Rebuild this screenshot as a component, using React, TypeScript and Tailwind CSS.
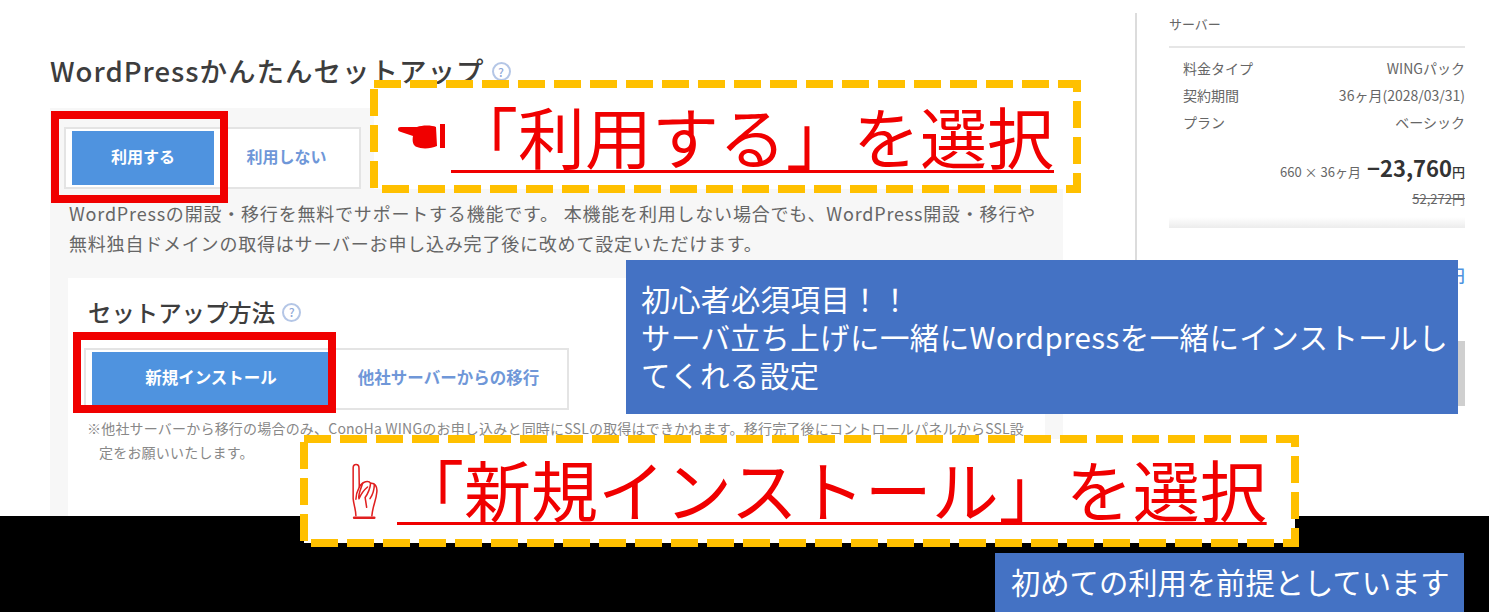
const jp = { fontFamily: '"Noto Sans CJK JP", sans-serif' }

function HelpIcon({ size }: { size: string }) {
  return (
    <span className={`inline-flex items-center justify-center rounded-full border-2 border-[#b4c6e6] text-[#8fa8d8] font-medium leading-none ${size}`}>
      ?
    </span>
  )
}

function DashedFrame({ width, height }: { width: number; height: number }) {
  return (
    <svg className="absolute left-0 top-0" width={width} height={height}>
      <rect x="4" y="4" width={width - 8} height={height - 8} fill="white" stroke="#ffc000" strokeWidth="8" strokeDasharray="27 9" />
    </svg>
  )
}

function HandRight() {
  return (
    <svg width="49" height="25" viewBox="0 0 49 25" className="shrink-0">
      <path d="M0 5 C0 3 2 3 5 3 L19 3 C24 1 34 1 38 3 L39 22 C33 25 23 25 19 23 C15 22 14 17 15 12 L3 8 C1 7 0 7 0 5 Z" fill="#f00000" />
      <rect x="42" y="0" width="5" height="24" fill="#f00000" />
    </svg>
  )
}

function HandUp() {
  return (
    <svg width="27" height="62" viewBox="46 30 88 190" className="shrink-0" fill="none" stroke="#e02020" strokeWidth="5" strokeLinecap="round" strokeLinejoin="round">
      <path d="M62 206 C62 186 55 172 53 150 L53 50 C53 35 72 35 72 50 L73 112 C84 92 104 90 110 100 C122 98 133 108 130 130 C128 155 117 172 114 206" />
      <path d="M73 112 C66 125 62 138 62 152" />
      <path d="M84 100 C76 122 68 140 72 150 C80 132 90 120 100 112" />
      <path d="M110 100 C108 118 102 132 92 146 L97 178" />
      <path d="M122 104 C122 122 116 138 108 150" />
      <path d="M56 212 H122" strokeWidth="8" />
    </svg>
  )
}

function PriceRow({ label, value }: { label: string; value: string }) {
  return (
    <div className="flex justify-between h-[27px] items-center pl-[14px] text-[14px] text-[#666]">
      <span>{label}</span>
      <span>{value}</span>
    </div>
  )
}

export default function App() {
  return (
    <div className="relative w-[1489px] h-[612px] overflow-hidden bg-white" style={jp}>
      <div className="flex h-[516px] pl-[50px] overflow-hidden">
        {/* 左カラム */}
        <div className="w-[1013px] shrink-0 flex flex-col">
          <div className="flex items-center gap-[7px] pt-[49px] h-[108px] pb-[17px]">
            <h1 className="text-[27.5px] tracking-[1px] leading-[36px] font-medium text-[#3d3d3d] whitespace-nowrap">WordPressかんたんセットアップ</h1>
            <HelpIcon size="w-[19px] h-[19px] text-[12px] mt-[3px]" />
          </div>
          <div className="flex-1 bg-[#f7f7f7] pt-[19px] flex flex-col">
            <div className="ml-[14px] w-[297px] h-[62px] border-2 border-[#e4e4e4] bg-white flex items-center pl-[6px]">
              <div className="w-[142px] h-[54px] bg-[#4f93df] text-white font-bold text-[16px] pb-[4px] flex items-center justify-center">利用する</div>
              <div className="flex-1 text-center text-[#6f97d8] font-bold text-[16px] pb-[4px]">利用しない</div>
            </div>
            <p className="ml-[19px] mt-[9px] text-[18px] tracking-[0.8px] leading-[30px] text-[#666] whitespace-nowrap">
              WordPressの開設・移行を無料でサポートする機能です。 本機能を利用しない場合でも、WordPress開設・移行や<br />
              無料独自ドメインの取得はサーバーお申し込み完了後に改めて設定いただけます。
            </p>
            <div className="ml-[18px] mr-[18px] mt-[20px] flex-1 bg-white pl-[16px] pt-[17px]">
              <div className="flex items-center gap-[7px] ml-[4px] h-[34px]">
                <h2 className="text-[23.4px] leading-[34px] font-medium text-[#3d3d3d] whitespace-nowrap">セットアップ方法</h2>
                <HelpIcon size="w-[19px] h-[19px] text-[12px]" />
              </div>
              <div className="mt-[19px] w-[485px] h-[62px] border-2 border-[#e4e4e4] bg-white flex items-center pl-[6px]">
                <div className="w-[238px] h-[54px] bg-[#4f93df] text-white font-bold text-[16.5px] pb-[4px] flex items-center justify-center">新規インストール</div>
                <div className="flex-1 text-center text-[#6f97d8] font-bold text-[16.5px] pb-[4px]">他社サーバーからの移行</div>
              </div>
              <p className="mt-[6px] ml-[3px] w-[942px] pl-[12px] -indent-[12px] text-[14px] tracking-[0.2px] leading-[24px] text-[#888]">
                ※他社サーバーから移行の場合のみ、ConoHa WINGのお申し込みと同時にSSLの取得はできかねます。移行完了後にコントロールパネルからSSL設定をお願いいたします。
              </p>
            </div>
          </div>
        </div>

        {/* 右カラム */}
        <aside className="ml-[72px] mt-[13px] h-[401px] w-[330px] shrink-0 border-l-2 border-[#dcdcdc] pl-[32px]">
          <div className="text-[13px] leading-[22px] text-[#666] h-[35px] border-b-2 border-[#e6e6e6]">サーバー</div>
          <div className="pt-[7px]">
            <PriceRow label="料金タイプ" value="WINGパック" />
            <PriceRow label="契約期間" value="36ヶ月(2028/03/31)" />
            <PriceRow label="プラン" value="ベーシック" />
          </div>
          <div className="flex justify-end items-baseline mt-[15px] text-[#666] h-[32px]">
            <span className="text-[13px] mr-[6px]">660 × 36ヶ月</span>
            <span className="text-[22px] font-bold text-[#333]">−23,760</span>
            <span className="text-[13px] font-medium text-[#333]">円</span>
          </div>
          <div className="text-right text-[13px] leading-[20px] mt-[6px] line-through text-[#666]">52,272円</div>
          <div className="mt-[8px] h-[11px] bg-gradient-to-b from-[#ffffff] to-[#ececec]" />
          <div className="text-right text-[30px] leading-[40px] mt-[21px] font-medium text-[#4f93df]">23,760<span className="text-[17px]">円</span></div>
          <div className="mt-[46px] ml-[180px] h-[65px] bg-[#cfcfcf]" />
        </aside>
      </div>
      <div className="h-[96px] bg-black" />

      {/* 赤枠 */}
      <div className="absolute left-[51px] top-[111px] w-[177px] h-[92px] border-[8px] border-[#f00000]" />
      <div className="absolute left-[73px] top-[332px] w-[263px] h-[81px] border-[8px] border-[#f00000]" />

      {/* 吹き出し */}
      <div className="absolute left-[370px] top-[80px] w-[711px] h-[113px] flex items-center pl-[28px]">
        <DashedFrame width={711} height={113} />
        <div className="relative flex items-center">
          <HandRight />
          <span className="ml-[4px] text-[67px] leading-[88px] text-[#f00000] whitespace-nowrap underline decoration-[3px] underline-offset-[6px] mt-[-3px]">「利用する」を選択</span>
        </div>
      </div>
      <div className="absolute left-[300px] top-[435px] w-[999px] h-[112px] flex items-center pl-[51px]">
        <DashedFrame width={999} height={112} />
        <div className="relative flex items-center">
          <HandUp />
          <span className="ml-[19px] text-[67px] leading-[88px] text-[#f00000] whitespace-nowrap underline decoration-[3px] underline-offset-[5px] mt-[-6px]">「新規インストール」を選択</span>
        </div>
      </div>

      {/* 青いメモ */}
      <div className="absolute left-[626px] top-[260px] w-[832px] h-[154px] bg-[#4472c4] text-white text-[29.5px] tracking-[0.4px] leading-[38px] pl-[15px] pr-[4px] pt-[19px]">
        初心者必須項目！！<br />
        サーバ立ち上げに一緒にWordpressを一緒にインストールしてくれる設定
      </div>
      <div className="absolute left-[995px] top-[553px] w-[469px] h-[59px] bg-[#4472c4] text-white text-[29.3px] leading-[56px] pl-[16px] whitespace-nowrap">
        初めての利用を前提としています
      </div>
    </div>
  )
}
